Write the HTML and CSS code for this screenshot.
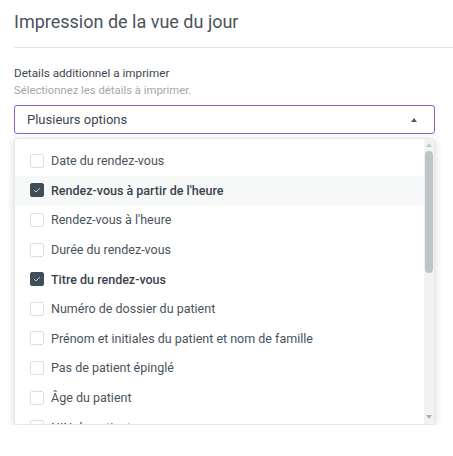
FILE: index.html
```html
<!DOCTYPE html>
<html lang="fr">
<head>
<meta charset="utf-8">
<link rel="stylesheet" href="styles.css">
</head>
<body>
<div class="page">
  <h1 class="title">Impression de la vue du jour</h1>
  <div class="divider"></div>
  <div class="field">
    <div class="label">Details additionnel a imprimer</div>
    <div class="hint">Sélectionnez les détails à imprimer.</div>
    <div class="select">
      <span>Plusieurs options</span>
      <span class="caret"></span>
    </div>
    <div class="dropdown">
      <div class="list">
        <div class="item"><span class="box"></span><span>Date du rendez-vous</span></div>
        <div class="item hover checked"><span class="box"><svg viewBox="0 0 14 14" width="14" height="14"><path d="M4.2 7.2 L6.1 9 L9.8 5.2" fill="none" stroke="#c9d0d6" stroke-width="1"/></svg></span><span>Rendez-vous à partir de l'heure</span></div>
        <div class="item"><span class="box"></span><span>Rendez-vous à l'heure</span></div>
        <div class="item"><span class="box"></span><span>Durée du rendez-vous</span></div>
        <div class="item checked"><span class="box"><svg viewBox="0 0 14 14" width="14" height="14"><path d="M4.2 7.2 L6.1 9 L9.8 5.2" fill="none" stroke="#c9d0d6" stroke-width="1"/></svg></span><span>Titre du rendez-vous</span></div>
        <div class="item"><span class="box"></span><span>Numéro de dossier du patient</span></div>
        <div class="item"><span class="box"></span><span>Prénom et initiales du patient et nom de famille</span></div>
        <div class="item"><span class="box"></span><span>Pas de patient épinglé</span></div>
        <div class="item"><span class="box"></span><span>Âge du patient</span></div>
        <div class="item"><span class="box"></span><span>NIN du patient</span></div>
      </div>
      <div class="scrollbar">
        <div class="arrow up"></div>
        <div class="track"><div class="thumb"></div></div>
        <div class="arrow down"></div>
      </div>
    </div>
  </div>
</div>
</body>
</html>
```
FILE: styles.css
```css
* { box-sizing: border-box; }
html, body { margin: 0; padding: 0; background: #fff; }
body { font-family: Roboto, "Liberation Sans", sans-serif; color: #444c55; }
.page { padding: 0 0 0 14px; }
.title {
  margin: 0;
  padding-top: 10px;
  font-size: 18px;
  font-weight: 400;
  line-height: 24px;
  color: #4a535c;
  height: 47px;
}
.divider { height: 1px; background: #e3e5e7; margin-top: 0; }
.field { width: 421px; padding-top: 17px; }
.label { font-size: 11.7px; line-height: 16px; color: #3e4650; }
.hint { font-size: 11.3px; line-height: 14px; color: #a3a8ad; margin-top: 3px; }
.select {
  margin-top: 7px;
  height: 29px;
  border: 1px solid #8d5fd3;
  border-radius: 3px;
  display: flex;
  align-items: center;
  justify-content: space-between;
  padding: 0 17px 0 12px;
  font-size: 13px;
  color: #3e4650;
}
.caret {
  width: 0; height: 0;
  border-left: 3.5px solid transparent;
  border-right: 3.5px solid transparent;
  border-bottom: 4px solid #4f5860;
}
.dropdown {
  margin-top: 4px;
  height: 287px;
  border-radius: 3px;
  border: 1px solid #e6e8ea;
  box-shadow: 0 2px 8px rgba(0,0,0,0.16);
  display: flex;
  overflow: hidden;
  background: #fff;
}
.list { flex: 1; overflow: hidden; padding-top: 7px; }
.item {
  height: 29.6px;
  display: flex;
  align-items: center;
  padding-left: 15px;
  font-size: 12.5px;
  color: #4a535c;
}
.item.hover { background: #f7f8f8; }
.item.checked { font-weight: 500; color: #3a434c; }
.box {
  width: 14px; height: 14px;
  border: 1px solid #dcdfe2;
  border-radius: 2px;
  margin-right: 7px;
  flex: none;
  display: flex;
}
.item.checked .box { background: #414e59; border-color: #414e59; }
.box svg { margin: -1px; }
.scrollbar {
  width: 10px;
  background: #f1f2f3;
  display: flex;
  flex-direction: column;
  align-items: center;
}
.arrow { width: 0; height: 0; flex: none; border-left: 3.5px solid transparent; border-right: 3.5px solid transparent; }
.arrow.up { border-bottom: 4px solid #c3c7ca; margin-top: 4px; }
.arrow.down { border-top: 4px solid #a9aeb2; margin-bottom: 5px; }
.track { flex: 1; width: 100%; padding: 4px 1px; }
.thumb { height: 122px; background: #bfc4c7; border-radius: 4px; }
```
